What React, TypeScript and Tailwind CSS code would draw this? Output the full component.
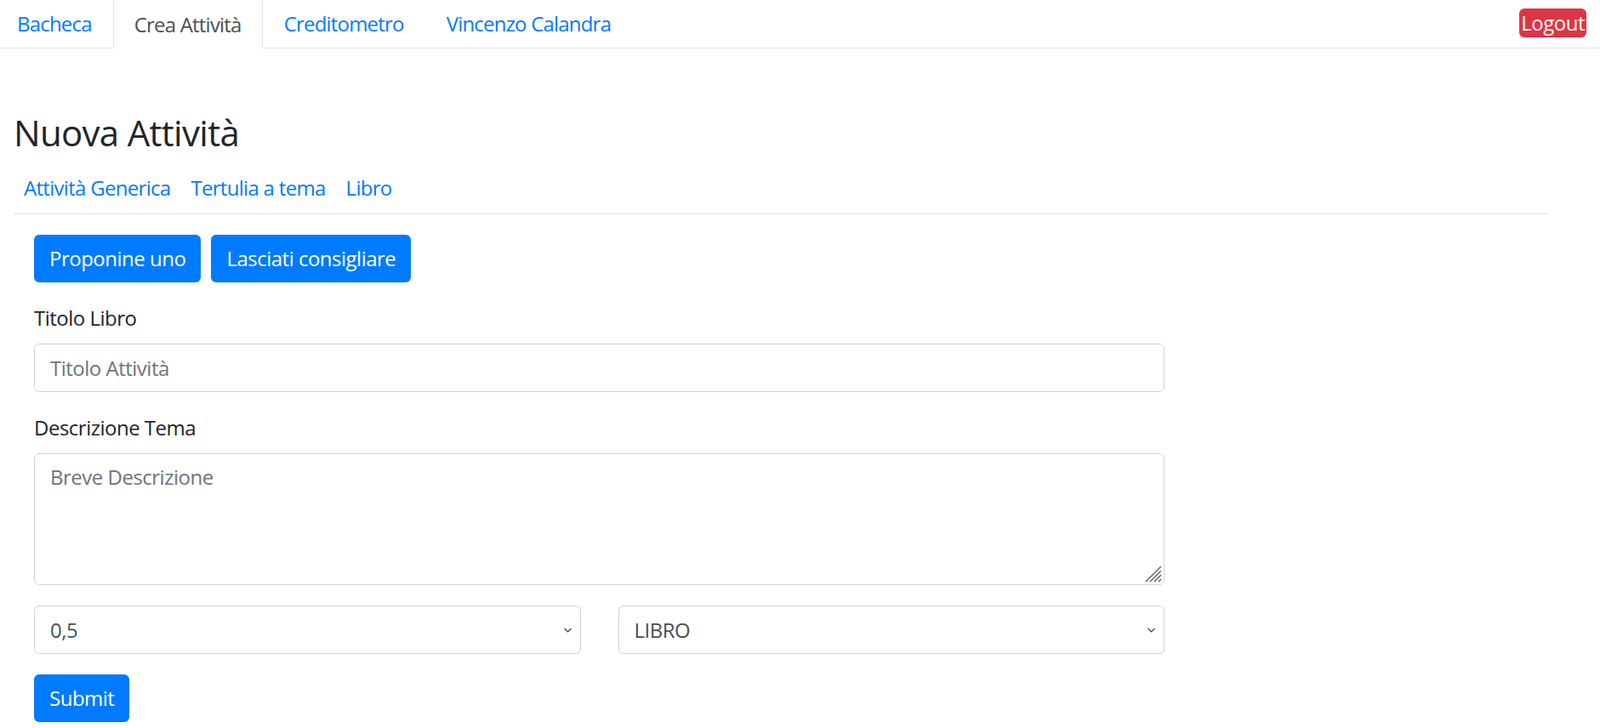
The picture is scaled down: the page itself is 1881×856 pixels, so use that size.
import { ChevronDown } from "lucide-react";

const tabs = [
  { label: "Bacheca", active: false },
  { label: "Crea Attività", active: true },
  { label: "Creditometro", active: false },
  { label: "Vincenzo Calandra", active: false },
];

const subLinks = ["Attività Generica", "Tertulia a tema", "Libro"];

function Select({ value }: { value: string }) {
  return (
    <div className="relative">
      <select
        defaultValue={value}
        className="h-[57px] w-full appearance-none rounded-[6px] border border-[#ced4da] bg-white pl-[18px] pr-[40px] text-[24px] tracking-[-0.5px] text-[#495057] outline-none"
      >
        <option>{value}</option>
      </select>
      <ChevronDown
        className="pointer-events-none absolute right-[8px] top-1/2 size-[15px] -translate-y-1/2 text-[#333]"
        strokeWidth={2}
      />
    </div>
  );
}

export default function App() {
  return (
    <div className="min-h-screen bg-white font-['Open_Sans','Noto_Sans',sans-serif] text-[24px] leading-[1.5] tracking-[-0.5px] text-[#212529]">
      <nav className="flex h-[57px] items-stretch border-b border-[#dee2e6]">
        <ul className="ml-[-5px] flex tracking-[-0.8px]">
          {tabs.map((t) => (
            <li key={t.label} className="flex">
              <a
                href="#"
                className={
                  t.active
                    ? "mb-[-1px] flex items-center border-x border-[#dee2e6] bg-white px-[24px] text-[#495057]"
                    : "flex items-center border-x border-transparent px-[24px] text-[#007bff]"
                }
              >
                {t.label}
              </a>
            </li>
          ))}
        </ul>
        <button
          type="button"
          className="ml-auto mr-[16px] mt-[10px] h-[34px] self-start rounded-[6px] bg-[#dc3545] px-[2px] leading-[34px] text-white"
        >
          Logout
        </button>
      </nav>

      <main className="px-[16px]">
        <h3 className="mt-[74px] text-[42px] font-normal leading-[1.2] tracking-[-0.7px]">Nuova Attività</h3>

        <div className="mt-[10px] flex w-[1804px] border-b border-[#dee2e6] tracking-[-0.7px]">
          {subLinks.map((l) => (
            <a key={l} href="#" className="px-[12px] py-[12px] text-[#007bff]">
              {l}
            </a>
          ))}
        </div>

        <form className="w-[1353px] pl-[24px] pt-[24px]">
          <div className="flex gap-[12px]">
            <button type="button" className="h-[56px] rounded-[6px] bg-[#007bff] px-[18px] text-white">
              Proponine uno
            </button>
            <button type="button" className="h-[56px] rounded-[6px] bg-[#007bff] px-[18px] text-white">
              Lasciati consigliare
            </button>
          </div>

          <div className="mt-[24px]">
            <label className="mb-[12px] block">Titolo Libro</label>
            <input
              placeholder="Titolo Attività"
              className="h-[57px] w-full rounded-[6px] border border-[#ced4da] px-[18px] text-[#495057] outline-none placeholder:text-[#6c757d]"
            />
          </div>

          <div className="mt-[24px]">
            <label className="mb-[12px] block">Descrizione Tema</label>
            <div className="relative">
              <textarea
                placeholder="Breve Descrizione"
                className="block h-[155px] w-full resize-none rounded-[6px] border border-[#ced4da] px-[18px] py-[9px] text-[#495057] outline-none placeholder:text-[#6c757d]"
              />
              <svg
                className="pointer-events-none absolute bottom-[3px] right-[3px]"
                width="20"
                height="20"
                viewBox="0 0 20 20"
              >
                <g stroke="#5f5f5f" strokeWidth="1.4">
                  <line x1="19" y1="1" x2="1" y2="19" />
                  <line x1="19" y1="6" x2="6" y2="19" />
                  <line x1="19" y1="11" x2="11" y2="19" />
                  <line x1="19" y1="16" x2="16" y2="19" />
                </g>
              </svg>
            </div>
          </div>

          <div className="mt-[24px] grid grid-cols-2 gap-[44px]">
            <Select value="0,5" />
            <Select value="LIBRO" />
          </div>

          <button type="submit" className="mt-[24px] h-[56px] rounded-[6px] bg-[#007bff] px-[18px] text-white">
            Submit
          </button>
        </form>
      </main>
    </div>
  );
}
